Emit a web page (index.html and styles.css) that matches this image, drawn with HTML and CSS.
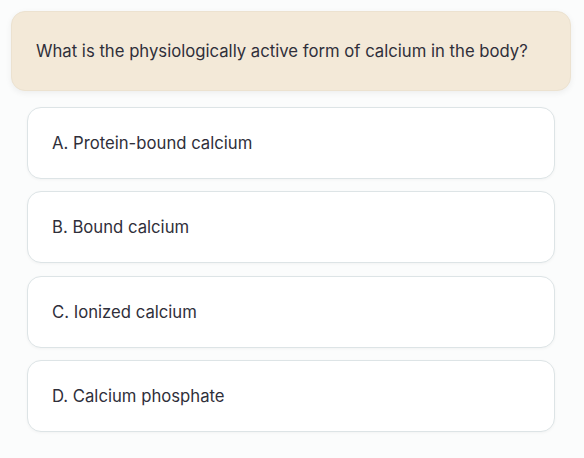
FILE: index.html
```html
<!DOCTYPE html>
<html lang="en">
<head>
<meta charset="utf-8">
<link rel="stylesheet" href="styles.css">
</head>
<body>
<div class="quiz">
  <div class="question">What is the physiologically active form of calcium in the body?</div>
  <div class="options">
    <div class="option">A. Protein-bound calcium</div>
    <div class="option">B. Bound calcium</div>
    <div class="option">C. Ionized calcium</div>
    <div class="option">D. Calcium phosphate</div>
  </div>
</div>
</body>
</html>
```
FILE: styles.css
```css
html, body {
  margin: 0;
  padding: 0;
  background: #fbfcfc;
}
body {
  font-family: "Inter", "Noto Sans", sans-serif;
  color: #2f2f3a;
}
.quiz {
  padding: 11px 13px 11px 11px;
}
.question {
  background: #f3e9d8;
  border: 1px solid #ece2d0;
  border-radius: 14px;
  padding: 0 24px;
  height: 78px;
  display: flex;
  align-items: center;
  font-size: 16.7px;
  box-shadow: 0 2px 6px rgba(0,0,0,0.06);
}
.options {
  display: flex;
  flex-direction: column;
  gap: 12.3px;
  margin: 16px 16px 0;
}
.option {
  background: #ffffff;
  border: 1px solid #dde4e6;
  border-radius: 14px;
  height: 70px;
  padding: 0 24px;
  display: flex;
  align-items: center;
  font-size: 16.7px;
  box-shadow: 0 1px 3px rgba(0,0,0,0.04);
}
```
